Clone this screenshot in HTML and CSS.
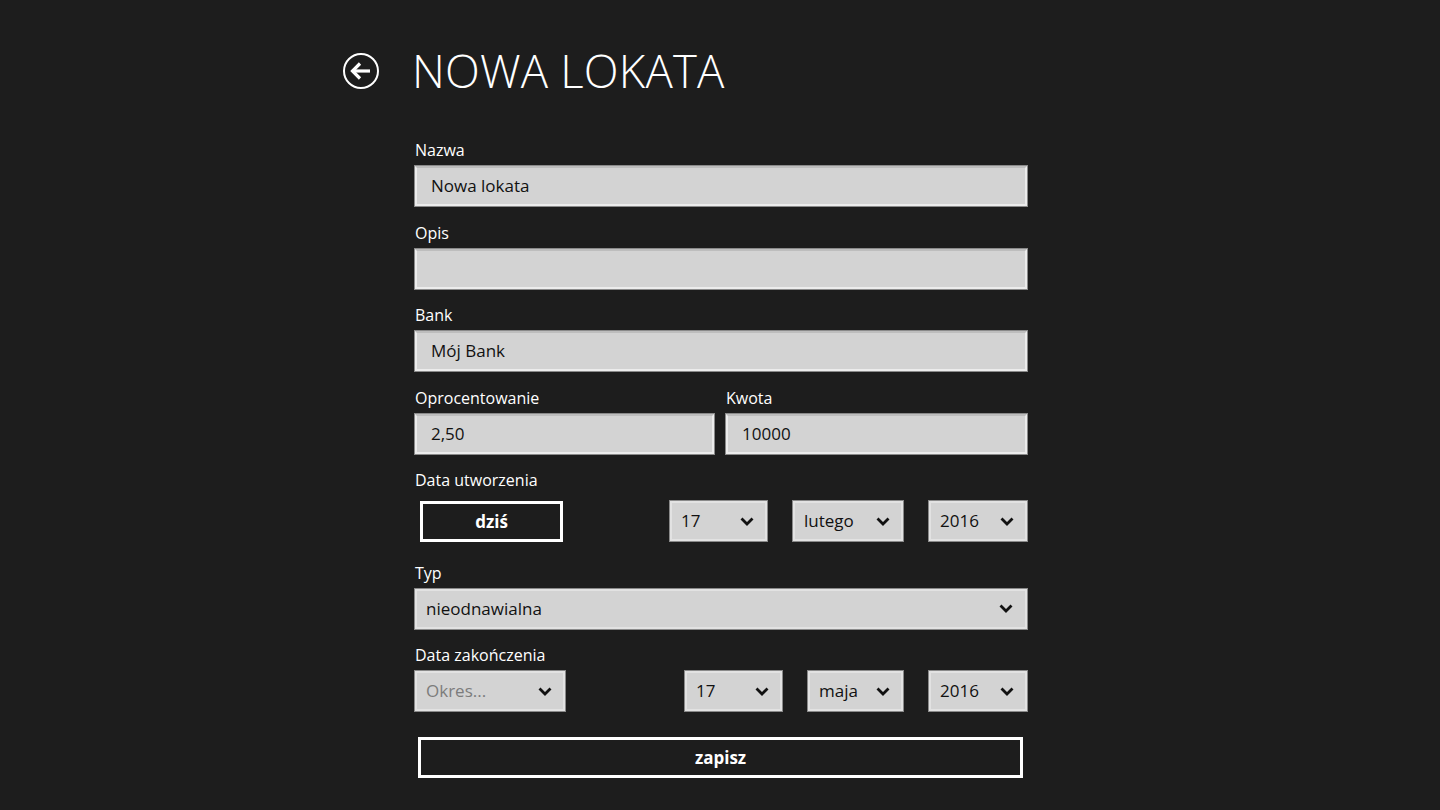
FILE: index.html
```html
<!DOCTYPE html>
<html lang="pl">
<head>
<meta charset="utf-8">
<title>Nowa lokata</title>
<link rel="stylesheet" href="styles.css">
</head>
<body>
<div class="page">
  <header class="header">
    <button class="back" aria-label="Wstecz">
      <svg width="38" height="38" viewBox="0 0 38 38">
        <circle cx="19" cy="19" r="17" fill="none" stroke="#fff" stroke-width="2"/>
        <path d="M10.5 19 H28" stroke="#fff" stroke-width="3.2" fill="none"/>
        <path d="M18 11.5 L10.5 19 L18 26.5" stroke="#fff" stroke-width="3.2" fill="none" stroke-linejoin="miter"/>
      </svg>
    </button>
    <h1 class="title">NOWA LOKATA</h1>
  </header>

  <main class="form">
    <div class="field">
      <label class="label">Nazwa</label>
      <div class="input">Nowa lokata</div>
    </div>
    <div class="field">
      <label class="label">Opis</label>
      <div class="input"></div>
    </div>
    <div class="field">
      <label class="label">Bank</label>
      <div class="input">Mój Bank</div>
    </div>
    <div class="pair">
      <div class="field">
        <label class="label">Oprocentowanie</label>
        <div class="input">2,50</div>
      </div>
      <div class="field">
        <label class="label">Kwota</label>
        <div class="input">10000</div>
      </div>
    </div>
    <div class="field">
      <label class="label">Data utworzenia</label>
      <div class="row row-created">
        <button class="btn btn-today">dziś</button>
        <div class="dates">
          <div class="select w-day"><span>17</span><svg class="chev" viewBox="0 0 14 9"><path d="M1.5 1.5 L7 7 L12.5 1.5"/></svg></div>
          <div class="select w-month1"><span>lutego</span><svg class="chev" viewBox="0 0 14 9"><path d="M1.5 1.5 L7 7 L12.5 1.5"/></svg></div>
          <div class="select w-year"><span>2016</span><svg class="chev" viewBox="0 0 14 9"><path d="M1.5 1.5 L7 7 L12.5 1.5"/></svg></div>
        </div>
      </div>
    </div>
    <div class="field">
      <label class="label">Typ</label>
      <div class="select select-full"><span>nieodnawialna</span><svg class="chev" viewBox="0 0 14 9"><path d="M1.5 1.5 L7 7 L12.5 1.5"/></svg></div>
    </div>
    <div class="field">
      <label class="label">Data zakończenia</label>
      <div class="row">
        <div class="select w-period"><span class="placeholder">Okres...</span><svg class="chev" viewBox="0 0 14 9"><path d="M1.5 1.5 L7 7 L12.5 1.5"/></svg></div>
        <div class="dates">
          <div class="select w-day"><span>17</span><svg class="chev" viewBox="0 0 14 9"><path d="M1.5 1.5 L7 7 L12.5 1.5"/></svg></div>
          <div class="select w-month2"><span>maja</span><svg class="chev" viewBox="0 0 14 9"><path d="M1.5 1.5 L7 7 L12.5 1.5"/></svg></div>
          <div class="select w-year"><span>2016</span><svg class="chev" viewBox="0 0 14 9"><path d="M1.5 1.5 L7 7 L12.5 1.5"/></svg></div>
        </div>
      </div>
    </div>
    <button class="btn btn-save">zapisz</button>
  </main>
</div>
</body>
</html>
```

FILE: styles.css
```css
* { box-sizing: border-box; }

html, body {
  margin: 0;
  padding: 0;
  background: #1d1d1d;
  color: #fff;
  font-family: "Open Sans", "Noto Sans", "Liberation Sans", sans-serif;
}

.page {
  width: 1440px;
  height: 810px;
  overflow: hidden;
}

.header {
  display: flex;
  align-items: center;
  padding: 43px 0 0 342px;
  height: 98px;
}

.back {
  width: 38px;
  height: 38px;
  padding: 0;
  border: 0;
  background: none;
  display: flex;
}

.title {
  margin: -2px 0 0 32px;
  font-weight: 300;
  font-size: 45.5px;
  line-height: 56px;
  letter-spacing: 0.2px;
  color: #fff;
}

.form {
  width: 612px;
  margin-left: 415px;
  display: flex;
  flex-direction: column;
}

.field {
  display: flex;
  flex-direction: column;
}

.label {
  display: block;
  margin: 16.5px 0 6px;
  height: 20px;
  line-height: 20px;
  font-size: 16px;
  color: #fff;
}

.form > .field:first-child .label {
  margin-top: 42px;
}

.input,
.select {
  height: 40px;
  background: #d3d3d3;
  border: 2px solid #ececec;
  color: #111;
  font-size: 17px;
  line-height: 36px;
}

.input {
  padding: 0 14px;
  border-top-color: #bdbdbd;
  box-shadow: 0 0 0 1px #8a8a8a;
}

.pair {
  display: flex;
  gap: 12px;
}

.pair .field:first-child { width: 299px; }
.pair .field:last-child { flex: 1; }

.row {
  display: flex;
  justify-content: space-between;
  align-items: center;
}

.row-created {
  height: 50px;
}

.dates {
  display: flex;
  gap: 26px;
}

.select {
  display: flex;
  align-items: center;
  justify-content: space-between;
  padding: 0 11px 0 9px;
  box-shadow: 0 0 0 1px #8a8a8a;
  border-color: #e2e2e2;
}

.select span { white-space: nowrap; }

.placeholder { color: #7c7c7c; }

.chev {
  width: 14px;
  height: 9px;
  flex: none;
}

.chev path {
  fill: none;
  stroke: #111;
  stroke-width: 2.8;
  stroke-linecap: butt;
  stroke-linejoin: miter;
}

.select-full {
  padding-right: 12px;
}

.w-day { width: 97px; }
.w-month1 { width: 110px; }
.w-month2 { width: 95px; }
.w-year { width: 98px; }
.w-period { width: 150px; }

.btn {
  background: #1d1d1d;
  border: 3px solid #fff;
  color: #fff;
  font-family: "Open Sans", "Noto Sans", "Liberation Sans", sans-serif;
  font-weight: 700;
  font-size: 17px;
  padding: 0;
}

.btn-today {
  width: 143px;
  height: 41px;
  margin-left: 5px;
}

.btn-save {
  width: 605px;
  height: 41px;
  margin: 26px 0 0 3px;
}
```
